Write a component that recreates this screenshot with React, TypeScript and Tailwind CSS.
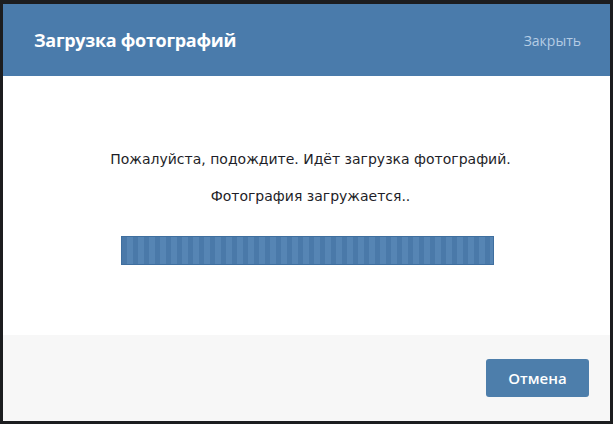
const App = () => {
  return (
    <div className="w-[613px] h-[424px] bg-[#1c1d1f] pt-[4px] px-[3px] pb-[3px] flex flex-col">
      {/* Header */}
      <div className="h-[72px] bg-[#4a7bab] flex items-center justify-between pl-[31px] pr-[29px] shrink-0">
        <h1 className="text-white font-bold text-[18px] tracking-[-0.3px] font-['Open_Sans',sans-serif]">Загрузка фотографий</h1>
        <button className="text-[#b5cce4] text-[14px] font-['Open_Sans',sans-serif]">Закрыть</button>
      </div>
      {/* Body */}
      <div className="h-[259px] bg-white flex flex-col items-center shrink-0 pt-[73px] font-['DejaVu_Sans',sans-serif] text-[#1e1e28] text-[14px]">
        <p className="leading-[20px] pl-[8px]">Пожалуйста, подождите. Идёт загрузка фотографий.</p>
        <p className="leading-[20px] mt-[17px] pl-[8px]">Фотография загружается..</p>
        <div className="mt-[30px] ml-[2px] w-[373px] h-[29px] border border-[#3f6f9f] bg-[repeating-linear-gradient(90deg,#4a79a9_0px,#4a79a9_5px,#5685b4_5px,#5685b4_11px)]" />
      </div>
      {/* Footer */}
      <div className="flex-1 bg-[#f7f7f7] flex items-center justify-end pr-[21px]">
        <button className="w-[103px] h-[38px] rounded-[3px] bg-[#4d7eab] text-white text-[15px] font-semibold font-['Open_Sans',sans-serif]">Отмена</button>
      </div>
    </div>
  );
};

export default App;
